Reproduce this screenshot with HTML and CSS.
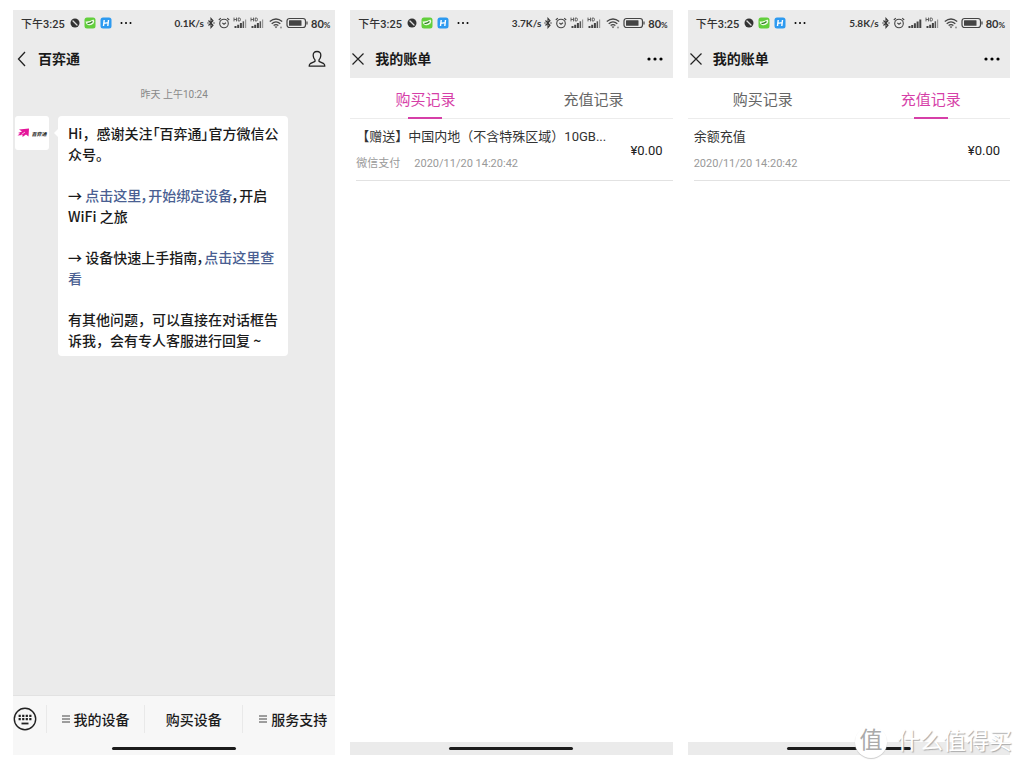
FILE: index.html
```html
<!DOCTYPE html>
<html lang="zh-CN">
<head>
<meta charset="utf-8">
<meta name="viewport" content="width=device-width, initial-scale=1">
<title>百弈通</title>
<link rel="stylesheet" href="styles.css">
</head>
<body>
<svg class="sprite" aria-hidden="true">
  <symbol id="i-mute" viewBox="0 0 10 10"><circle cx="5" cy="5" r="4.5" fill="#333"/><path d="M3 3l4 4" stroke="#ddd" stroke-width="1.3" stroke-linecap="round"/></symbol>
  <symbol id="i-green" viewBox="0 0 12 12"><rect x=".5" y=".5" width="11" height="11" rx="2.5" fill="#62cf3c"/><path d="M1.500 4.500Q5 5 9.500 2.500Q11 4 9.500 6.500Q7 9 4 8Q2 7.500 1.500 4.500z" fill="#eefbe6"/><path d="M3.500 6.300Q6 7 8.500 4.500" fill="none" stroke="#2c7a20" stroke-width="1.200"/></symbol>
  <symbol id="i-blue" viewBox="0 0 12 12"><rect x=".5" y=".5" width="11" height="11" rx="2.5" fill="#2d9af0"/><path d="M4.200 3L3.500 9M8.500 3L7.800 9M3.800 6.400L8.200 5.600" stroke="#fff" stroke-width="1.400" fill="none"/></symbol>
  <symbol id="i-dots" viewBox="0 0 12 4"><circle cx="1.500" cy="2" r="1"/><circle cx="6" cy="2" r="1"/><circle cx="10.500" cy="2" r="1"/></symbol>
  <symbol id="i-bt" viewBox="0 0 8 12"><path d="M1.500 3.500L6 8.300L4 10.500V1.500L6 3.700L1.500 8.500" fill="none" stroke="#333" stroke-width="1.100"/><circle cx="1" cy="6" r=".7" fill="#333"/><circle cx="7" cy="6" r=".7" fill="#333"/></symbol>
  <symbol id="i-alarm" viewBox="0 0 12 12"><g fill="none" stroke="#444" stroke-width="1.100"><circle cx="6" cy="6.500" r="4.300"/><path d="M.8 3L2.800 1.100M11.200 3L9.200 1.100M4.300 5.800L6 7.200L8 5.800"/></g></symbol>
  <symbol id="i-signal" viewBox="0 0 14 12"><g fill="#444"><path d="M.5 9H2.500v2h-2zM3.200 8h2v3h-2zM5.900 6.300h2V11h-2zM8.600 4.500h2V11h-2z"/><path d="M11.300 2.500h2V11h-2z"/></g></symbol>
  <symbol id="i-hd" viewBox="0 0 14 12"><path d="M1 .6v3.800M3.500 .6v3.800M1 2.500h2.500M5.200 1v3h1q1.300 0 1.300-1.500T6.200 1z" fill="none" stroke="#555" stroke-width=".9"/><path d="M1.500 9h2v2h-2zM4.200 7.700h2V11h-2zM6.900 6h2v5h-2z" fill="#444"/><path d="M9.600 4.300h1.500V11H9.600z" fill="#555"/><path d="M12 2.500h1.200V11H12z" fill="#999"/></symbol>
  <symbol id="i-wifi" viewBox="0 0 14 12"><g fill="none" stroke="#444" stroke-width="1.300"><path d="M.8 4.600Q7-.6 13.200 4.600M2.700 6.700Q7 3 11.300 6.700M4.600 8.600Q7 6.600 9.400 8.600"/></g><path d="M5.500 9.600h3L7 11.300z" fill="#444"/><circle cx="12" cy="10.500" r=".9" fill="#888"/></symbol>
  <symbol id="i-battery" viewBox="0 0 22 12"><rect x="1" y="1.500" width="18.500" height="9" rx="2.500" fill="none" stroke="#444" stroke-width="1.200"/><rect x="3" y="3.300" width="12.500" height="5.400" rx=".5" fill="#444"/><path d="M21 4.500v3" stroke="#444" stroke-width="1.200"/></symbol>
  <symbol id="i-close" viewBox="0 0 14 14"><path d="M1.500 1.500l11 11M12.500 1.500l-11 11" stroke="#222" stroke-width="1.200"/></symbol>
  <symbol id="i-more" viewBox="0 0 18 6"><circle cx="3" cy="3" r="1.600"/><circle cx="9" cy="3" r="1.600"/><circle cx="15" cy="3" r="1.600"/></symbol>
</svg>

<main class="screens">
  <section class="phone phone-chat">
    <div class="status">
      <span class="clock">下午3:25</span>
      <svg class="ico10"><use href="#i-mute"/></svg><svg class="ico12"><use href="#i-green"/></svg><svg class="ico12"><use href="#i-blue"/></svg><svg class="dots"><use href="#i-dots"/></svg>
      <span class="status-right"><span class="speed">0.1K/s</span><svg class="bt"><use href="#i-bt"/></svg><svg class="ico12 alarm"><use href="#i-alarm"/></svg><svg class="ico14"><use href="#i-hd"/></svg><svg class="ico14"><use href="#i-hd"/></svg><svg class="ico14 wifi"><use href="#i-wifi"/></svg><svg class="battery"><use href="#i-battery"/></svg><span>80<small>%</small></span></span>
    </div>
    <header class="nav">
      <button class="icon-btn" aria-label="返回"><svg width="14" height="16" viewBox="0 0 14 16"><path d="M11 1L4.500 8l6.500 7" fill="none" stroke="#222" stroke-width="1.300"/></svg></button>
      <h1>百弈通</h1>
      <button class="icon-btn nav-end" aria-label="资料"><svg width="18" height="18" viewBox="0 0 18 18"><path d="M9 1.500C6.300 1.500 5 3.300 5.200 5.600C5.300 7.400 6 8.900 7 9.900V11.300L2.200 13.700Q1.200 14.300 1.200 16.200H16.800Q16.800 14.300 15.800 13.700L11 11.300V9.900C12 8.900 12.700 7.400 12.800 5.600C13 3.300 11.700 1.500 9 1.500z" fill="none" stroke="#222" stroke-width="1.300" stroke-linejoin="round"/></svg></button>
    </header>
    <div class="chat">
      <time class="stamp">昨天 上午10:24</time>
      <div class="message">
        <div class="avatar"><svg width="13" height="10" viewBox="0 0 13 10"><path d="M2 1.500L12 .5L11.500 8.500L9 6.500L5.500 9L5.500 7L.5 7.500L3 5.500L1 5L5 3.500z" fill="#e5149a"/><path d="M4.500 6.500L8 4" stroke="#fff" stroke-width=".7"/></svg><span>百弈通</span></div>
        <div class="bubble">
          <p>Hi，感谢关注<span class="tight">「百弈通」</span>官方微信公<br>众号。</p>
          <p class="tight">→ <a href="#bind">点击这里，开始绑定设备</a>，开启<br>WiFi 之旅</p>
          <p class="tight">→ 设备快速上手指南，<a href="#guide">点击这里查<br>看</a></p>
          <p>有其他问题，可以直接在对话框告<br>诉我，会有专人客服进行回复 ~</p>
        </div>
      </div>
    </div>
    <nav class="menu">
      <button class="keyboard" aria-label="键盘"><svg width="24" height="24" viewBox="0 0 24 24"><circle cx="12" cy="12" r="10.700" fill="none" stroke="#222" stroke-width="1.400"/><path d="M5.600 8.800h13M5.600 12.200h13" stroke="#222" stroke-width="2.200" stroke-dasharray="2.200 1.350"/><path d="M8.500 16.500h7" stroke="#222" stroke-width="1.800"/></svg></button>
      <button><svg class="bars" viewBox="0 0 8 8"><path d="M0 1h8M0 4h8M0 7h8" stroke="#444"/></svg>我的设备</button>
      <button>购买设备</button>
      <button class="support"><svg class="bars" viewBox="0 0 8 8"><path d="M0 1h8M0 4h8M0 7h8" stroke="#444"/></svg>服务支持</button>
    </nav>
    <div class="home"><span></span></div>
  </section>

  <section class="phone">
    <div class="status">
      <span class="clock">下午3:25</span>
      <svg class="ico10"><use href="#i-mute"/></svg><svg class="ico12"><use href="#i-green"/></svg><svg class="ico12"><use href="#i-blue"/></svg><svg class="dots"><use href="#i-dots"/></svg>
      <span class="status-right"><span class="speed">3.7K/s</span><svg class="bt"><use href="#i-bt"/></svg><svg class="ico12 alarm"><use href="#i-alarm"/></svg><svg class="ico14"><use href="#i-hd"/></svg><svg class="ico14"><use href="#i-hd"/></svg><svg class="ico14 wifi"><use href="#i-wifi"/></svg><svg class="battery"><use href="#i-battery"/></svg><span>80<small>%</small></span></span>
    </div>
    <header class="nav">
      <button class="icon-btn" aria-label="关闭"><svg width="14" height="14"><use href="#i-close"/></svg></button>
      <h1>我的账单</h1>
      <button class="icon-btn nav-end" aria-label="更多"><svg width="18" height="6"><use href="#i-more"/></svg></button>
    </header>
    <div class="tabs" role="tablist">
      <button role="tab" aria-selected="true">购买记录</button>
      <button role="tab" aria-selected="false">充值记录</button>
    </div>
    <ul class="records">
      <li>
        <div class="record">
          <h2>【赠送】中国内地（不含特殊区域）10GB...</h2>
          <p><span>微信支付</span><time>2020/11/20 14:20:42</time></p>
        </div>
        <span class="amount">¥0.00</span>
      </li>
    </ul>
    <div class="home"><span></span></div>
  </section>

  <section class="phone">
    <div class="status">
      <span class="clock">下午3:25</span>
      <svg class="ico10"><use href="#i-mute"/></svg><svg class="ico12"><use href="#i-green"/></svg><svg class="ico12"><use href="#i-blue"/></svg><svg class="dots"><use href="#i-dots"/></svg>
      <span class="status-right"><span class="speed">5.8K/s</span><svg class="bt"><use href="#i-bt"/></svg><svg class="ico12 alarm"><use href="#i-alarm"/></svg><svg class="ico14"><use href="#i-signal"/></svg><svg class="ico14"><use href="#i-hd"/></svg><svg class="ico14 wifi"><use href="#i-wifi"/></svg><svg class="battery"><use href="#i-battery"/></svg><span>80<small>%</small></span></span>
    </div>
    <header class="nav">
      <button class="icon-btn" aria-label="关闭"><svg width="14" height="14"><use href="#i-close"/></svg></button>
      <h1>我的账单</h1>
      <button class="icon-btn nav-end" aria-label="更多"><svg width="18" height="6"><use href="#i-more"/></svg></button>
    </header>
    <div class="tabs" role="tablist">
      <button role="tab" aria-selected="false">购买记录</button>
      <button role="tab" aria-selected="true">充值记录</button>
    </div>
    <ul class="records">
      <li>
        <div class="record">
          <h2>余额充值</h2>
          <p><time>2020/11/20 14:20:42</time></p>
        </div>
        <span class="amount">¥0.00</span>
      </li>
    </ul>
    <div class="home"><span></span></div>
  </section>
</main>
<div class="watermark"><span class="seal">值</span><span>什么值得买</span></div>
</body>
</html>
```

FILE: styles.css
```css
* { box-sizing: border-box; }

body {
  margin: 0;
  background: #fff;
  color: #1a1a1a;
  font-family: Roboto, "Noto Sans CJK SC", sans-serif;
}

h1, h2, p, ul { margin: 0; padding: 0; }
ul { list-style: none; }
svg { display: block; flex: none; }
a { color: #4a5f92; text-decoration: none; }

button {
  border: 0;
  padding: 0;
  background: none;
  color: inherit;
  font: inherit;
}

.sprite { position: absolute; width: 0; height: 0; }

.screens {
  display: grid;
  grid-template-columns: repeat(3, 1fr);
  gap: 15px;
  min-height: 100vh;
  padding: 10px 14px 13px 13px;
}

.phone {
  display: flex;
  flex-direction: column;
  min-width: 0;
}

.phone-chat { background: #ebebeb; }

.status {
  display: flex;
  align-items: center;
  gap: 4px;
  height: 26px;
  padding: 0 5px 0 8px;
  background: #ebebeb;
  color: #333;
  font-family: Roboto, "Noto Sans CJK SC", sans-serif;
  font-size: 11px;
  font-weight: 500;
  white-space: nowrap;
}

.clock { margin-right: 1px; }
.ico10 { width: 10px; height: 10px; }
.ico12 { width: 12px; height: 12px; }
.ico14 { width: 14px; height: 12px; }
.dots { width: 12px; height: 4px; margin-left: 4px; }

.status-right {
  display: flex;
  align-items: center;
  gap: 3px;
  margin-left: auto;
  font-family: Lato, sans-serif;
  font-weight: 700;
}

.speed { font-size: 10px; }
.status-right small { font-size: 8px; }
.bt { width: 8px; height: 12px; }
.wifi { margin-left: 2px; }
.battery { width: 22px; height: 12px; }

.nav {
  display: flex;
  align-items: center;
  height: 42px;
  padding: 3px 9px 0 1px;
  background: #ebebeb;
}

.icon-btn { flex: none; }
.nav-end { margin-left: auto; }

.nav h1 {
  margin-left: 10px;
  font-size: 14px;
  font-weight: 700;
  line-height: 20px;
}

.chat { flex: 1; padding: 9px 2px; }

.stamp {
  display: block;
  color: #888;
  font-size: 10px;
  line-height: 16px;
  text-align: center;
}

.message {
  display: flex;
  align-items: flex-start;
  gap: 9px;
  margin-top: 13px;
}

.avatar {
  display: flex;
  align-items: center;
  justify-content: center;
  flex: none;
  gap: 1px;
  width: 34px;
  height: 34px;
  border-radius: 3px;
  background: #fff;
  font-size: 5px;
  font-style: italic;
  font-weight: 700;
}

.bubble {
  position: relative;
  display: flex;
  flex-direction: column;
  gap: 20px;
  padding: 7px 10px 5px;
  border-radius: 4px;
  background: #fff;
  font-family: "Noto Sans CJK SC", sans-serif;
  font-size: 14px;
  font-weight: 500;
  line-height: 21px;
  white-space: nowrap;
}

.tight { font-feature-settings: "palt"; }

.bubble::before {
  content: "";
  position: absolute;
  top: 12px;
  left: -4px;
  border: 5px solid transparent;
  border-left: 0;
  border-right-color: #fff;
}

.menu {
  display: grid;
  grid-template-columns: 33px 98fr 98fr 93fr;
  align-items: center;
  height: 47px;
  border-top: 1px solid #e2e2e2;
  background: #f7f7f7;
  font-size: 14px;
  font-weight: 500;
}

.menu button {
  display: flex;
  align-items: center;
  justify-content: center;
  gap: 4px;
  height: 28px;
  border-left: 1px solid #e9e9e9;
}

.menu .keyboard { justify-content: flex-start; border: 0; }
.menu .support { padding-left: 8px; }
.bars { width: 8px; height: 8px; }

.home {
  display: flex;
  align-items: center;
  justify-content: center;
  height: 13px;
  background: #ebebeb;
}

.phone-chat .home { background: #f7f7f7; }

.home span {
  width: 124px;
  height: 3px;
  border-radius: 2px;
  background: #1c1c1c;
}

.tabs {
  display: flex;
  justify-content: center;
  gap: 108px;
  height: 41px;
  padding-right: 4px;
  border-bottom: 1px solid #ececec;
  color: #666;
  font-size: 15px;
}

.tabs button { position: relative; width: 60px; white-space: nowrap; }
.tabs [aria-selected="true"] { color: #d63fa8; }

.tabs [aria-selected="true"]::after {
  content: "";
  position: absolute;
  right: 13px;
  bottom: -1px;
  left: 13px;
  height: 2px;
  background: #d63fa8;
}

.records { flex: 1; padding-left: 6px; }

.records li {
  display: flex;
  align-items: center;
  justify-content: space-between;
  padding: 8px 10px 7px 0;
  border-bottom: 1px solid #e2e2e2;
}

.record h2 {
  color: #333;
  font-size: 13px;
  font-weight: 400;
  line-height: 20px;
  white-space: nowrap;
}

.record p {
  display: flex;
  gap: 14px;
  margin-top: 8px;
  color: #999;
  font-size: 11px;
  line-height: 18px;
}

.amount { color: #222; font-size: 13px; }

.watermark {
  position: absolute;
  right: 12px;
  bottom: 10px;
  display: flex;
  align-items: center;
  gap: 10px;
  color: #fff;
  font-size: 23px;
  line-height: 32px;
  text-shadow: 1px 1px 1px #aaa;
}

.seal {
  width: 32px;
  height: 32px;
  border-radius: 50%;
  background: #fff;
  box-shadow: 0 1px 1px #ccc;
  color: #aaa;
  line-height: 30px;
  text-align: center;
  text-shadow: none;
}
```
